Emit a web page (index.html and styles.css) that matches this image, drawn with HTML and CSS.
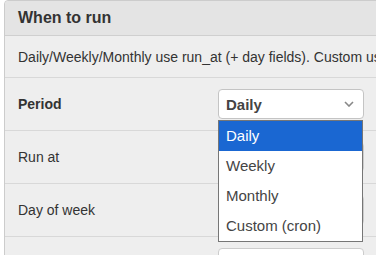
FILE: index.html
```html
<!DOCTYPE html>
<html>
<head>
<meta charset="utf-8">
<link rel="stylesheet" href="styles.css">
</head>
<body>
<div class="panel">
  <div class="panel-head">When to run</div>
  <div class="desc">Daily/Weekly/Monthly use run_at (+ day fields). Custom uses a cron expression.</div>
  <div class="row">
    <div class="lbl strong">Period</div>
    <div class="field">
      <div class="select">
        <span>Daily</span>
        <svg class="chev" width="10" height="6" viewBox="0 0 10 6"><path d="M1 1l4 4 4-4" fill="none" stroke="#888" stroke-width="1.6"/></svg>
      </div>
      <ul class="dropdown">
        <li class="opt sel">Daily</li>
        <li class="opt">Weekly</li>
        <li class="opt">Monthly</li>
        <li class="opt">Custom (cron)</li>
      </ul>
    </div>
  </div>
  <div class="row">
    <div class="lbl">Run at</div>
    <div class="field"><div class="input"></div></div>
  </div>
  <div class="row">
    <div class="lbl">Day of week</div>
    <div class="field"><div class="input"></div></div>
  </div>
  <div class="row">
    <div class="lbl">Day of month</div>
    <div class="field"><div class="input"></div></div>
  </div>
</div>
</body>
</html>
```
FILE: styles.css
```css
html, body {
  margin: 0;
  padding: 0;
  overflow: hidden;
  background: #ffffff;
}
body {
  padding-left: 4px;
  font-family: "Liberation Sans", Arial, sans-serif;
  color: #333333;
  font-size: 14px;
}
.panel {
  width: 640px;
  border: 1px solid #cccccc;
  border-radius: 4px;
  background: #eeeeee;
}
.panel-head {
  height: 34px;
  line-height: 34px;
  padding-left: 13px;
  font-weight: bold;
  font-size: 16px;
  background: #e4e4e4;
  border-bottom: 1px solid #cfcfcf;
  border-radius: 4px 4px 0 0;
}
.desc {
  height: 41px;
  line-height: 43px;
  padding-left: 13px;
  border-bottom: 1px solid #d8d8d8;
  white-space: nowrap;
}
.row {
  display: grid;
  grid-template-columns: 200px 1fr;
  padding: 11px 0 11px 13px;
  border-bottom: 1px solid #d8d8d8;
}
.lbl {
  line-height: 30px;
}
.strong {
  font-weight: bold;
}
.field {
  position: relative;
}
.select {
  box-sizing: border-box;
  width: 146px;
  height: 30px;
  border: 1px solid #c4c4c4;
  border-radius: 4px;
  background: #ffffff;
  display: flex;
  align-items: center;
  justify-content: space-between;
  padding: 0 9px 0 7px;
  font-weight: bold;
  font-size: 15px;
  color: #444444;
}
.chev {
  display: block;
}
.input {
  box-sizing: border-box;
  width: 146px;
  height: 30px;
  border: 1px solid #cccccc;
  border-radius: 4px;
  background: #ffffff;
}
.dropdown {
  position: absolute;
  left: 0;
  top: 31px;
  width: 145px;
  box-sizing: border-box;
  margin: 0;
  padding: 0;
  list-style: none;
  background: #ffffff;
  border: 1px solid #767676;
  z-index: 2;
}
.opt {
  height: 30px;
  line-height: 30px;
  padding-left: 7px;
  font-size: 15px;
  color: #444444;
}
.opt.sel {
  background: #1a67d2;
  color: #ffffff;
}
```
